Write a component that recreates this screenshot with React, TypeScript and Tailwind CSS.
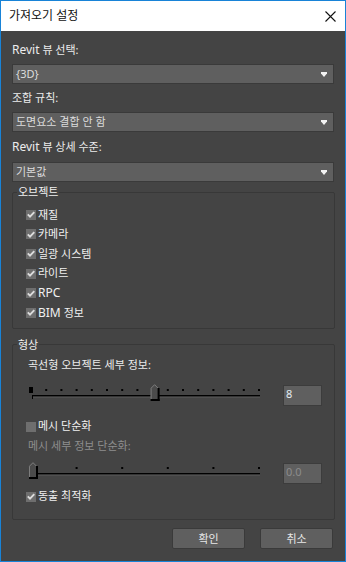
import React from 'react'

const FONT = "font-['Noto_Sans','Noto_Sans_CJK_KR',sans-serif]"

function Arrow() {
  return (
    <svg width="6" height="5" viewBox="0 0 6 5">
      <path d="M0 0h6v1.4L3 5 0 1.4z" fill="#f2f2f2" />
    </svg>
  )
}

function Select({ children }: { children: React.ReactNode }) {
  return (
    <div className="h-[20px] bg-[#5f5f5f] border border-[#3a3a3a] flex items-center justify-between pl-[3px] pr-[6px] text-[#dcdcdc]">
      <span>{children}</span>
      <Arrow />
    </div>
  )
}

function Label({ children, className = '' }: { children: React.ReactNode; className?: string }) {
  return <div className={`h-[16px] leading-[16px] text-[#ececec] ${className}`}>{children}</div>
}

function Check({ checked, children, className = '' }: { checked: boolean; children: React.ReactNode; className?: string }) {
  return (
    <div className={`h-[19.6px] flex items-center gap-[2px] text-[#f0f0f0] ${className}`}>
      <span className="w-[10px] h-[10px] bg-[#6e6e6e] flex items-center justify-center shrink-0">
        {checked && (
          <svg width="8" height="7" viewBox="0 0 8 7">
            <path d="M0.8 3.4 3 5.6 7.3 1.1" stroke="#dcdcdc" strokeWidth="1.9" fill="none" />
          </svg>
        )}
      </span>
      <span>{children}</span>
    </div>
  )
}

// trackbar: ticks + thumb, drawn as one picture
function Slider({ steps, pos, step }: { steps: number; pos: number; step: number }) {
  const ticks = []
  for (let k = 1; k <= steps; k++) {
    if (k === pos) continue
    ticks.push(<rect key={k} x={2 + step * k} y={7} width={2} height={2} fill="#000" />)
  }
  const tx = 3 + step * pos - 2
  return (
    <svg width="240" height="20" viewBox="0 0 240 20" className="ml-[2px] shrink-0">
      {pos !== 0 && <rect x="1" y="5" width="4" height="6" fill="#000" />}
      {ticks}
      <rect x="4" y="13" width={steps * step} height="1" fill="#000" />
      <rect x="4" y="14" width={steps * step} height="1" fill="#353535" />
      <rect x="4" y="15" width={steps * step} height="1" fill="#505050" />
      <rect x="4" y="13" width="1" height="4" fill="#000" />
      <polygon points={`${tx},6 ${tx + 4},2 ${tx + 8},6 ${tx + 8},18 ${tx},18`} fill="#4b4b4b" />
      <polyline points={`${tx + 0.5},17 ${tx + 0.5},6.2 ${tx + 4},2.7 ${tx + 7.5},6.2`} stroke="#7c7c7c" strokeWidth="1" fill="none" />
      <rect x={tx + 7} y="6" width="2" height="13" fill="#000" />
      <rect x={tx} y="17" width="9" height="2" fill="#000" />
    </svg>
  )
}

function NumBox({ value, dim }: { value: string; dim?: boolean }) {
  return (
    <div
      className={`ml-[15px] mt-[3px] w-[39px] h-[21px] bg-[#5f5f5f] border border-[#3c3c3c] pl-[2px] leading-[16px] ${
        dim ? 'text-[#8c8c8c]' : 'text-[#e4ecf2]'
      }`}
    >
      {value}
    </div>
  )
}

export default function App() {
  return (
    <div className={`w-[346px] h-[562px] border border-[#1883d7] bg-[#444444] flex flex-col text-[11px] ${FONT}`}>
      {/* title bar */}
      <div className="h-[30px] bg-white flex items-center justify-between pl-[8px] pr-[9px]">
        <span className="text-[12px] text-[#111]">가져오기 설정</span>
        <svg width="11" height="11" viewBox="0 0 11 11">
          <path d="M0.5 0.5 10.5 10.5M10.5 0.5 0.5 10.5" stroke="#111" strokeWidth="1.1" />
        </svg>
      </div>

      <div className="flex-1 px-[11px] pt-[11px] flex flex-col">
        <Label>
          <span className="text-[12px]">Revit</span> 뷰 선택:
        </Label>
        <div className="mt-[6px]">
          <Select>{'{3D}'}</Select>
        </div>

        <Label className="mt-[6px]">조합 규칙:</Label>
        <div className="mt-[6px]">
          <Select>도면요소 결합 안 함</Select>
        </div>

        <Label className="mt-[7px]">
          <span className="text-[12px]">Revit</span> 뷰 상세 수준:
        </Label>
        <div className="mt-[7px]">
          <Select>기본값</Select>
        </div>

        {/* objects group */}
        <fieldset className="mt-[3px] -mr-px border border-[#383838] rounded-[2px]">
          <legend className="ml-[4px] px-[1px] leading-[14px] text-[#f0f0f0]">오브젝트</legend>
          <div className="pl-[13px] pt-[6px] pb-[5px]">
            <Check checked>재질</Check>
            <Check checked>카메라</Check>
            <Check checked>일광 시스템</Check>
            <Check checked>라이트</Check>
            <Check checked>
              <span className="text-[12px]">RPC</span>
            </Check>
            <Check checked>
              <span className="text-[12px]">BIM</span> 정보
            </Check>
          </div>
        </fieldset>

        {/* geometry group */}
        <fieldset className="mt-[9px] -mr-px border border-[#383838] rounded-[2px]">
          <legend className="ml-[4px] px-[1px] leading-[14px] text-[#f0f0f0]">형상</legend>
          <div className="pl-[13px] pb-[14px]">
            <Label className="mt-[5px] ml-[2px]">곡선형 오브젝트 세부 정보:</Label>
            <div className="mt-[9px] h-[24px] flex items-start">
              <Slider steps={15} pos={8} step={15.2} />
              <NumBox value="8" />
            </div>
            <Check checked={false} className="mt-[13px] !h-[16px]">
              메시 단순화
            </Check>
            <div className="mt-[3px] ml-[2px] h-[16px] leading-[16px] text-[#8e8e8e]">메시 세부 정보 단순화:</div>
            <div className="mt-[6px] h-[24px] flex items-start">
              <Slider steps={5} pos={0} step={45.6} />
              <NumBox value="0.0" dim />
            </div>
            <Check checked className="mt-[5px] !h-[16px]">
              동출 최적화
            </Check>
          </div>
        </fieldset>

        <div className="mt-[8px] flex justify-end gap-[15px] pr-[1px]">
          <button className="w-[73px] h-[21px] bg-[#5f5f5f] border border-[#3a3a3a] rounded-[2px] text-[#e8e8e8] leading-[19px]">
            확인
          </button>
          <button className="w-[73px] h-[21px] bg-[#5f5f5f] border border-[#3a3a3a] rounded-[2px] text-[#e8e8e8] leading-[19px]">
            취소
          </button>
        </div>
      </div>
    </div>
  )
}
